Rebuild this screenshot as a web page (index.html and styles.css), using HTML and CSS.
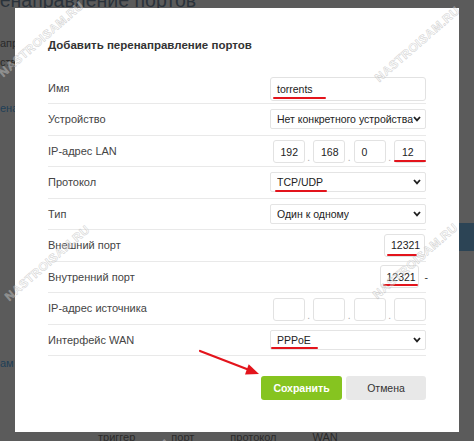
FILE: index.html
```html
<!DOCTYPE html>
<html lang="ru">
<head>
<meta charset="utf-8">
<title>Добавить перенаправление портов</title>
<link rel="stylesheet" href="styles.css">
</head>
<body>
<div class="page">
  <h1 class="page-title">Перенаправление портов</h1>
  <p class="bg-line bg-l1">апр</p>
  <p class="bg-line bg-l2">ств</p>
  <p class="bg-line bg-l3 bg-link">ена</p>
  <div class="bg-btn"></div>
  <p class="bg-line bg-l4 bg-link">ам</p>
  <div class="bg-head"><span>триггер</span><span>порт</span><span>протокол</span><span>WAN</span></div>
</div>

<div class="modal">
  <h2 class="modal-title">Добавить перенаправление портов</h2>
  <div class="form">
    <div class="row">
      <span class="label">Имя</span>
      <div class="input input-wide">torrents<i class="mark mark-name"></i></div>
    </div>
    <div class="row">
      <span class="label">Устройство</span>
      <div class="select select-device"><span class="select-text">Нет конкретного устройства</span><svg class="chev" viewBox="0 0 8 6"><polyline points="1,1 4,4.4 7,1"/></svg></div>
    </div>
    <div class="row">
      <span class="label">IP-адрес LAN</span>
      <div class="ip">
        <div class="input ip-box">192</div><span class="dot">.</span>
        <div class="input ip-box">168</div><span class="dot">.</span>
        <div class="input ip-box">0</div><span class="dot">.</span>
        <div class="input ip-box">12<i class="mark mark-ip"></i></div>
      </div>
    </div>
    <div class="row">
      <span class="label">Протокол</span>
      <div class="select"><span class="select-text">TCP/UDP</span><svg class="chev" viewBox="0 0 8 6"><polyline points="1,1 4,4.4 7,1"/></svg><i class="mark mark-proto"></i></div>
    </div>
    <div class="row">
      <span class="label">Тип</span>
      <div class="select"><span class="select-text">Один к одному</span><svg class="chev" viewBox="0 0 8 6"><polyline points="1,1 4,4.4 7,1"/></svg></div>
    </div>
    <div class="row">
      <span class="label">Внешний порт</span>
      <div class="input port-ext">12321<i class="mark mark-ext"></i></div>
    </div>
    <div class="row">
      <span class="label">Внутренний порт</span>
      <div class="port-range">
        <div class="input port-int">12321<i class="mark mark-int"></i></div>
        <span class="dash">-</span>
      </div>
    </div>
    <div class="row">
      <span class="label">IP-адрес источника</span>
      <div class="ip">
        <div class="input ip-box"></div><span class="dot">.</span>
        <div class="input ip-box"></div><span class="dot">.</span>
        <div class="input ip-box"></div><span class="dot">.</span>
        <div class="input ip-box"></div>
      </div>
    </div>
    <div class="row">
      <span class="label">Интерфейс WAN</span>
      <div class="select select-wan"><span class="select-text">PPPoE</span><svg class="chev" viewBox="0 0 8 6"><polyline points="1,1 4,4.4 7,1"/></svg><i class="mark mark-wan"></i></div>
    </div>
  </div>
  <div class="actions">
    <button class="btn btn-save" type="button">Сохранить</button>
    <button class="btn btn-cancel" type="button">Отмена</button>
  </div>
</div>

<svg class="annot" viewBox="0 0 474 441" width="474" height="441">
  <g class="wm">
    <text x="44" y="42" transform="rotate(-41 44 42)">NASTROISAM.RU</text>
    <text x="420" y="47" transform="rotate(-41 420 47)">NASTROISAM.RU</text>
    <text x="50" y="266" transform="rotate(-41 50 266)">NASTROISAM.RU</text>
    <text x="418" y="264" transform="rotate(-41 418 264)">NASTROISAM.RU</text>
    <text x="130" y="480" transform="rotate(-41 130 480)">NASTROISAM.RU</text>
  </g>
  <line class="arrow-line" x1="200" y1="351" x2="248" y2="369.5"/>
  <polygon class="arrow-head" points="259,374 245,374.5 248.7,364.2"/>
</svg>
</body>
</html>
```

FILE: styles.css
```css
html, body {
  margin: 0;
  padding: 0;
}

body {
  width: 474px;
  height: 441px;
  overflow: hidden;
  position: relative;
  background: #5b5b5b;
  font-family: "Liberation Sans", Arial, sans-serif;
}

/* dimmed page behind the dialog */
.page {
  display: flex;
  flex-direction: column;
  align-items: flex-start;
  color: #2b2f33;
}

.page-title {
  margin: -10px 0 0 -36px;
  font-size: 19.5px;
  line-height: 20px;
  font-weight: normal;
  color: #2a323a;
  white-space: nowrap;
}

.bg-line {
  margin: 0;
  font-size: 11px;
  line-height: 14px;
  white-space: nowrap;
  color: #2a2a2a;
}

.bg-l1 { margin-top: 26px; }
.bg-l2 { margin-top: 5px; }
.bg-l3 { margin-top: 32px; }
.bg-l4 { margin-top: 105px; }

.bg-link {
  color: #1f3f57;
}

.bg-btn {
  margin: 108px 0 0 456px;
  width: 40px;
  height: 28px;
  border-radius: 3px;
  background: #2c4455;
}

.bg-head {
  display: flex;
  gap: 36px;
  margin: 60px 0 0 98px;
  font-size: 11px;
  line-height: 14px;
  color: #2a2a2a;
  white-space: nowrap;
}

/* dialog */
.modal {
  position: absolute;
  left: 15px;
  top: 8px;
  width: 444px;
  height: 424px;
  box-sizing: border-box;
  padding: 29px 33px 0;
  background: #fff;
}

.modal-title {
  margin: 0;
  height: 16px;
  font-size: 11.5px;
  line-height: 16px;
  font-weight: bold;
  color: #333;
}

.form {
  margin-top: 19.5px;
}

.row {
  display: flex;
  align-items: center;
  justify-content: space-between;
  height: 31.5px;
  box-sizing: border-box;
  border-bottom: 1px solid #e9e9e9;
}

.label {
  font-size: 11px;
  color: #444;
  white-space: nowrap;
}

.input {
  position: relative;
  box-sizing: border-box;
  height: 23px;
  display: flex;
  align-items: center;
  padding: 0 6px;
  border: 1px solid #e2e2e2;
  border-radius: 3px;
  background: #fff;
  font-size: 10.5px;
  color: #222;
  white-space: nowrap;
}

.input-wide {
  width: 156px;
  height: 24px;
  margin-top: 3px;
}

.select {
  position: relative;
  box-sizing: border-box;
  width: 156px;
  height: 20px;
  display: flex;
  align-items: center;
  justify-content: space-between;
  padding: 0 4px 0 6px;
  border: 1px solid #e4e4e4;
  border-radius: 2px;
  font-size: 10.5px;
  color: #222;
  white-space: nowrap;
}

.select-text {
  overflow: hidden;
}

.chev {
  flex: none;
  width: 8px;
  height: 6px;
  fill: none;
  stroke: #1f1f1f;
  stroke-width: 1.8;
}

.select-device .select-text {
  margin-right: -2px;
}

.ip {
  display: flex;
  align-items: flex-end;
  margin-top: 2px;
}

.ip-box {
  width: 32px;
  padding-left: 7px;
}

.dot {
  width: 8.5px;
  text-align: center;
  font-size: 10px;
  line-height: 10px;
  color: #aaa;
}

.port-ext {
  width: 41px;
  margin-right: 1px;
}

.port-range {
  display: flex;
  align-items: center;
  margin-right: -2px;
}

.port-int {
  width: 39px;
}

.dash {
  margin-left: 6px;
  font-size: 10.5px;
  color: #333;
}

.actions {
  display: flex;
  justify-content: flex-end;
  gap: 4px;
  margin-top: 20px;
}

.btn {
  height: 24px;
  border: 0;
  border-radius: 3px;
  padding: 0;
  font-family: "Liberation Sans", Arial, sans-serif;
  font-size: 10.5px;
}

.btn-save {
  width: 81px;
  background: #86c420;
  color: #fff;
  font-weight: bold;
}

.btn-cancel {
  width: 80px;
  background: #e8e8e8;
  color: #333;
}

/* red hand-drawn annotations */
.mark {
  position: absolute;
  height: 2px;
  border-radius: 1px;
  background: #e3141c;
}

.mark-name { left: 2px; top: 19px; width: 53px; }
.mark-ip { left: -1px; top: 19px; width: 32px; }
.mark-proto { left: 4px; top: 17px; width: 52px; }
.mark-ext { left: 2px; top: 19px; width: 30px; }
.mark-int { left: 2px; top: 18px; width: 35px; }
.mark-wan { left: 0; top: 16px; width: 47px; }

.annot {
  position: absolute;
  left: 0;
  top: 0;
  pointer-events: none;
}

.wm text {
  font-family: "Liberation Sans", Arial, sans-serif;
  font-size: 12px;
  font-weight: bold;
  letter-spacing: 0.5px;
  text-anchor: middle;
  fill: rgba(255, 255, 255, 0.3);
  stroke: rgba(170, 170, 170, 0.5);
  stroke-width: 0.6;
}

.arrow-line {
  stroke: #e3141c;
  stroke-width: 2.2;
  stroke-linecap: round;
}

.arrow-head {
  fill: #e3141c;
}
```
